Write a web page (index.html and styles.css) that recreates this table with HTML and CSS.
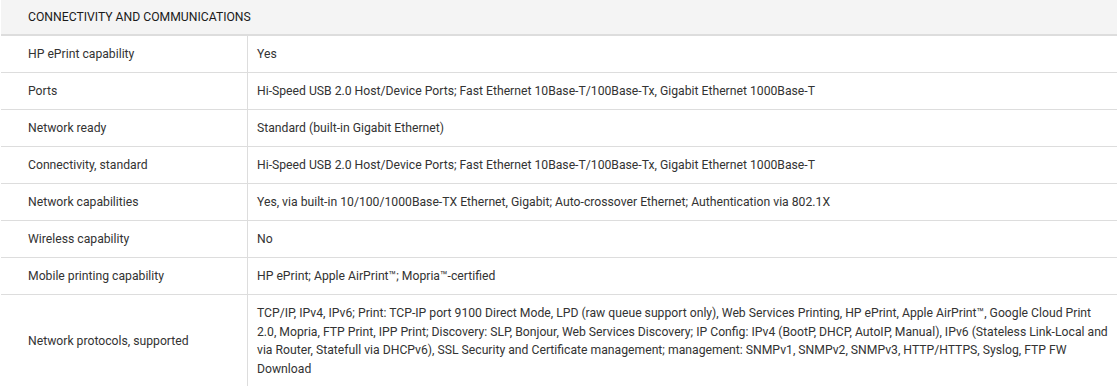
FILE: index.html
```html
<!DOCTYPE html>
<html lang="en">
<head>
  <meta charset="UTF-8" />
  <meta name="viewport" content="width=device-width, initial-scale=1.0" />
  <title>Specifications</title>
  <link rel="stylesheet" href="styles.css">
</head>
<body>

  <table class="specs">
    <thead>
      <tr>
        <th colspan="2">CONNECTIVITY AND COMMUNICATIONS</th>
      </tr>
    </thead>
    <tbody>
      <tr>
        <td class="spec-name">HP ePrint capability</td>
        <td class="spec-value">Yes</td>
      </tr>
      <tr>
        <td class="spec-name">Ports</td>
        <td class="spec-value">Hi-Speed USB 2.0 Host/Device Ports; Fast Ethernet 10Base-T/100Base-Tx, Gigabit Ethernet 1000Base-T</td>
      </tr>
      <tr>
        <td class="spec-name">Network ready</td>
        <td class="spec-value">Standard (built-in Gigabit Ethernet)</td>
      </tr>
      <tr>
        <td class="spec-name">Connectivity, standard</td>
        <td class="spec-value">Hi-Speed USB 2.0 Host/Device Ports; Fast Ethernet 10Base-T/100Base-Tx, Gigabit Ethernet 1000Base-T</td>
      </tr>
      <tr>
        <td class="spec-name">Network capabilities</td>
        <td class="spec-value">Yes, via built-in 10/100/1000Base-TX Ethernet, Gigabit; Auto-crossover Ethernet; Authentication via 802.1X</td>
      </tr>
      <tr>
        <td class="spec-name">Wireless capability</td>
        <td class="spec-value">No</td>
      </tr>
      <tr>
        <td class="spec-name">Mobile printing capability</td>
        <td class="spec-value">HP ePrint; Apple AirPrint™; Mopria™-certified</td>
      </tr>
      <tr>
        <td class="spec-name">Network protocols, supported</td>
        <td class="spec-value">TCP/IP, IPv4, IPv6; Print: TCP-IP port 9100 Direct Mode, LPD (raw queue support only), Web Services Printing, HP ePrint, Apple AirPrint™, Google Cloud Print 2.0, Mopria, FTP Print, IPP Print; Discovery: SLP, Bonjour, Web Services Discovery; IP Config: IPv4 (BootP, DHCP, AutoIP, Manual), IPv6 (Stateless Link-Local and via Router, Statefull via DHCPv6), SSL Security and Certificate management; management: SNMPv1, SNMPv2, SNMPv3, HTTP/HTTPS, Syslog, FTP FW Download</td>
      </tr>
    </tbody>
  </table>

</body>
</html>
```

FILE: styles.css
```css
* {
  margin: 0;
  padding: 0;
  box-sizing: border-box;
  font-family: Roboto, sans-serif;
}

body {
  background-color: #fff;
  color: #333;
  padding: 0 1px;
}

.specs {
  width: 1116px;
  border-collapse: separate;
  border-spacing: 0;
  font-size: 12.2px;
  line-height: 18.5px;
}

.specs th {
  background-color: #f4f4f4;
  text-align: left;
  font-weight: 400;
  color: #1a1a1a;
  padding: 7px 27px;
  height: 36px;
  border-bottom: 2px solid #ddd;
}

.specs td {
  padding: 9px 27px 8px;
  height: 37px;
  border-bottom: 1px solid #ddd;
  vertical-align: middle;
}

.spec-name {
  width: 247px;
  border-right: 1px solid #ddd;
}

.specs td.spec-value {
  padding-left: 9px;
  padding-right: 8px;
}
```
